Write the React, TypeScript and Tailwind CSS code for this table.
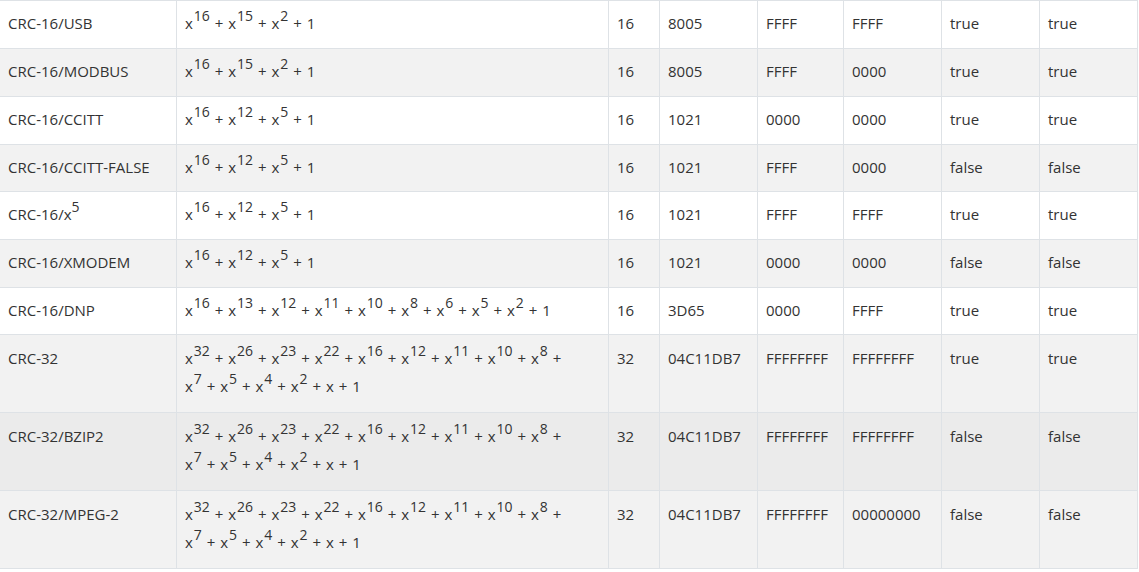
type Term = [string, string?]

interface CrcRow {
  name: [string, string?]
  poly: Term[][]
  width: string
  poly16: string
  init: string
  xorout: string
  refin: string
  refout: string
  bg: string
  h: string
}

const p16a: Term[][] = [[['x', '16'], ['x', '15'], ['x', '2'], ['1']]]
const p16b: Term[][] = [[['x', '16'], ['x', '12'], ['x', '5'], ['1']]]
const p32: Term[][] = [
  [['x', '32'], ['x', '26'], ['x', '23'], ['x', '22'], ['x', '16'], ['x', '12'], ['x', '11'], ['x', '10'], ['x', '8']],
  [['x', '7'], ['x', '5'], ['x', '4'], ['x', '2'], ['x'], ['1']],
]

const rows: CrcRow[] = [
  { name: ['CRC-16/USB'], poly: p16a, width: '16', poly16: '8005', init: 'FFFF', xorout: 'FFFF', refin: 'true', refout: 'true', bg: 'bg-white', h: 'h-[48px]' },
  { name: ['CRC-16/MODBUS'], poly: p16a, width: '16', poly16: '8005', init: 'FFFF', xorout: '0000', refin: 'true', refout: 'true', bg: 'bg-[#f2f2f2]', h: 'h-[48px]' },
  { name: ['CRC-16/CCITT'], poly: p16b, width: '16', poly16: '1021', init: '0000', xorout: '0000', refin: 'true', refout: 'true', bg: 'bg-white', h: 'h-[48px]' },
  { name: ['CRC-16/CCITT-FALSE'], poly: p16b, width: '16', poly16: '1021', init: 'FFFF', xorout: '0000', refin: 'false', refout: 'false', bg: 'bg-[#f2f2f2]', h: 'h-[47px]' },
  { name: ['CRC-16/x', '5'], poly: p16b, width: '16', poly16: '1021', init: 'FFFF', xorout: 'FFFF', refin: 'true', refout: 'true', bg: 'bg-white', h: 'h-[48px]' },
  { name: ['CRC-16/XMODEM'], poly: p16b, width: '16', poly16: '1021', init: '0000', xorout: '0000', refin: 'false', refout: 'false', bg: 'bg-[#f2f2f2]', h: 'h-[48px]' },
  {
    name: ['CRC-16/DNP'],
    poly: [[['x', '16'], ['x', '13'], ['x', '12'], ['x', '11'], ['x', '10'], ['x', '8'], ['x', '6'], ['x', '5'], ['x', '2'], ['1']]],
    width: '16', poly16: '3D65', init: '0000', xorout: 'FFFF', refin: 'true', refout: 'true', bg: 'bg-white', h: 'h-[47px]',
  },
  { name: ['CRC-32'], poly: p32, width: '32', poly16: '04C11DB7', init: 'FFFFFFFF', xorout: 'FFFFFFFF', refin: 'true', refout: 'true', bg: 'bg-[#f2f2f2]', h: 'h-[78px]' },
  { name: ['CRC-32/BZIP2'], poly: p32, width: '32', poly16: '04C11DB7', init: 'FFFFFFFF', xorout: 'FFFFFFFF', refin: 'false', refout: 'false', bg: 'bg-[#ebebeb]', h: 'h-[78px]' },
  { name: ['CRC-32/MPEG-2'], poly: p32, width: '32', poly16: '04C11DB7', init: 'FFFFFFFF', xorout: '00000000', refin: 'false', refout: 'false', bg: 'bg-[#f2f2f2]', h: 'h-[78px]' },
]

function Sup({ children }: { children: string }) {
  return <sup className="relative top-[-2px] ml-[1px] align-super text-[14px] leading-none">{children}</sup>
}

function Poly({ lines }: { lines: Term[][] }) {
  return (
    <>
      {lines.map((line, li) => (
        <div key={li}>
          {line.map(([base, exp], i) => (
            <span key={i}>
              {base}
              {exp && <Sup>{exp}</Sup>}
              {(i < line.length - 1 || li < lines.length - 1) && <span className="px-[1px]"> + </span>}
            </span>
          ))}
        </div>
      ))}
    </>
  )
}

export default function App() {
  const cell = 'border-r border-[#dee2e6] pl-2 pr-2'
  return (
    <div className="min-h-[572px] bg-white font-['Open_Sans','Liberation_Sans',sans-serif] text-[15px] leading-[28px] text-[#333]">
      <div className="w-[1138px] border-t border-[#dee2e6]">
        {rows.map((r) => {
          const pt = r.poly.length > 1 ? 'pt-[9px]' : 'pt-[8px]'
          return (
            <div
              key={r.name.join('')}
              className={`grid grid-cols-[177px_432px_51px_98px_86px_98px_98px_98px] border-b border-[#dee2e6] ${r.bg} ${r.h}`}
            >
              <div className={`${cell} ${pt}`}>
                {r.name[0]}
                {r.name[1] && <sup className="relative top-[-2px] align-super text-[14px] leading-none">{r.name[1]}</sup>}
              </div>
              <div className={`${cell} ${pt}`}>
                <Poly lines={r.poly} />
              </div>
              <div className={`${cell} ${pt}`}>{r.width}</div>
              <div className={`${cell} ${pt}`}>{r.poly16}</div>
              <div className={`${cell} ${pt}`}>{r.init}</div>
              <div className={`${cell} ${pt}`}>{r.xorout}</div>
              <div className={`${cell} ${pt}`}>{r.refin}</div>
              <div className={`${cell} ${pt}`}>{r.refout}</div>
            </div>
          )
        })}
      </div>
    </div>
  )
}
